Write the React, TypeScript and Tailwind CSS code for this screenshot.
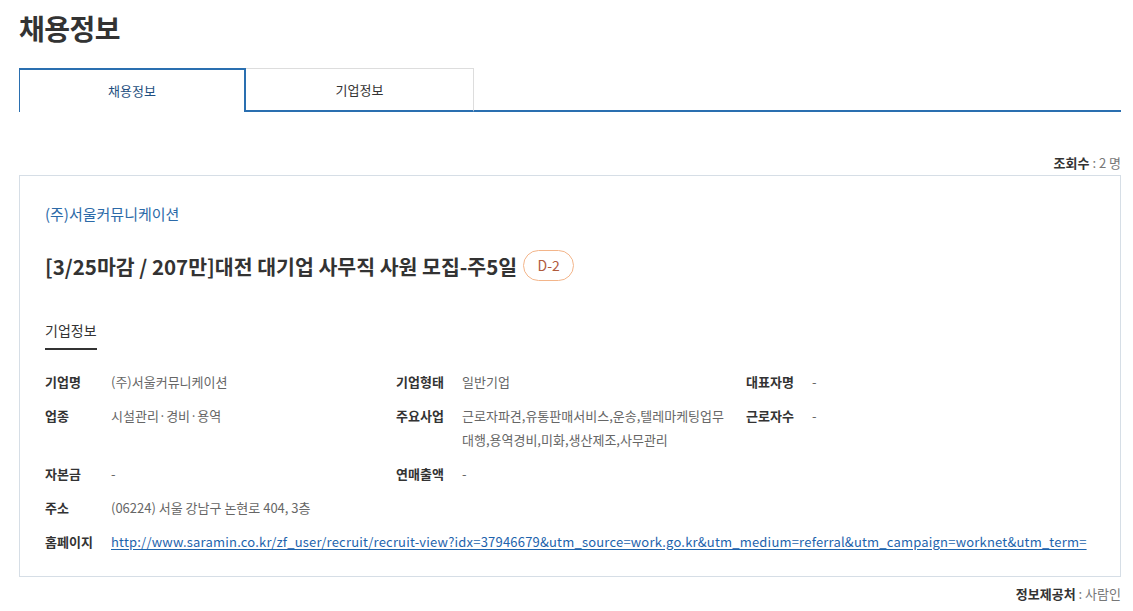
import React from "react";

const font = { fontFamily: '"Noto Sans CJK KR", "Noto Sans", sans-serif' };

function Row({ label, value, className }: { label: string; value: React.ReactNode; className?: string }) {
  return (
    <div className={"flex " + (className ?? "")}>
      <div className="w-[66px] shrink-0 font-semibold text-[#333]">{label}</div>
      <div className="flex-1 text-[#666]">{value}</div>
    </div>
  );
}

export default function App() {
  return (
    <div className="min-h-[611px] bg-white pl-[19px] pr-[12px] text-[13px] text-[#333]" style={font}>
      <h1 className="pt-[8px] text-[28px] font-semibold leading-[40px] tracking-[-0.5px] text-[#333]">채용정보</h1>

      <div className="mt-[20px] flex h-[44px]">
        <div className="flex w-[227px] items-center justify-center border-t-2 border-r-2 border-l border-[#2a6fb0] text-[13px] text-[#1f4f80]">
          채용정보
        </div>
        <div className="flex w-[228px] items-center justify-center border-t border-r border-b-2 border-t-[#dddddd] border-r-[#dddddd] border-b-[#2a6fb0] text-[13px] text-[#333]">
          기업정보
        </div>
        <div className="flex-1 border-b-2 border-[#2a6fb0]" />
      </div>

      <div className="mt-[42px] text-right leading-[18px]">
        <span className="font-semibold text-[#333]">조회수</span>
        <span className="text-[#777]"> : 2 명</span>
      </div>

      <div className="mt-[3px] border border-[#d6dee6] pb-[22px] pl-[25px] pr-[20px] pt-[27px]">
        <div className="text-[15px] leading-[22px] text-[#2c6aa8]">(주)서울커뮤니케이션</div>
        <div className="mt-[25px] flex items-center gap-[6px]">
          <h2 className="text-[20.5px] font-semibold leading-[30px] text-[#333]">[3/25마감 / 207만]대전 대기업 사무직 사원 모집-주5일</h2>
          <span className="flex h-[31px] w-[51px] items-center justify-center rounded-full border border-[#f3b58a] text-[14px] text-[#b05a3c]">
            D-2
          </span>
        </div>

        <div className="mt-[39px] inline-block border-b-2 border-[#333] pb-[8px] text-[14px] leading-[20px] text-[#333]">
          기업정보
        </div>

        <div className="mt-[20px] flex flex-col gap-[10px] leading-[24px]">
          <div className="flex">
            <Row className="w-[351px]" label="기업명" value="(주)서울커뮤니케이션" />
            <Row className="w-[350px]" label="기업형태" value="일반기업" />
            <Row className="flex-1" label="대표자명" value="-" />
          </div>
          <div className="flex">
            <Row className="w-[351px]" label="업종" value="시설관리·경비·용역" />
            <Row
              className="w-[350px]"
              label="주요사업"
              value={
                <>
                  근로자파견,유통판매서비스,운송,텔레마케팅업무
                  <br />
                  대행,용역경비,미화,생산제조,사무관리
                </>
              }
            />
            <Row className="flex-1" label="근로자수" value="-" />
          </div>
          <div className="flex">
            <Row className="w-[351px]" label="자본금" value="-" />
            <Row className="flex-1" label="연매출액" value="-" />
          </div>
          <Row label="주소" value="(06224) 서울 강남구 논현로 404, 3층" />
          <Row
            label="홈페이지"
            value={
              <a
                href="#"
                className="whitespace-nowrap tracking-[0.2px] text-[#1e64ad] underline underline-offset-2"
              >
                http://www.saramin.co.kr/zf_user/recruit/recruit-view?idx=37946679&amp;utm_source=work.go.kr&amp;utm_medium=referral&amp;utm_campaign=worknet&amp;utm_term=
              </a>
            }
          />
        </div>
      </div>

      <div className="mt-[8px] text-right leading-[18px]">
        <span className="font-semibold text-[#333]">정보제공처</span>
        <span className="text-[#777]"> : 사람인</span>
      </div>
    </div>
  );
}
